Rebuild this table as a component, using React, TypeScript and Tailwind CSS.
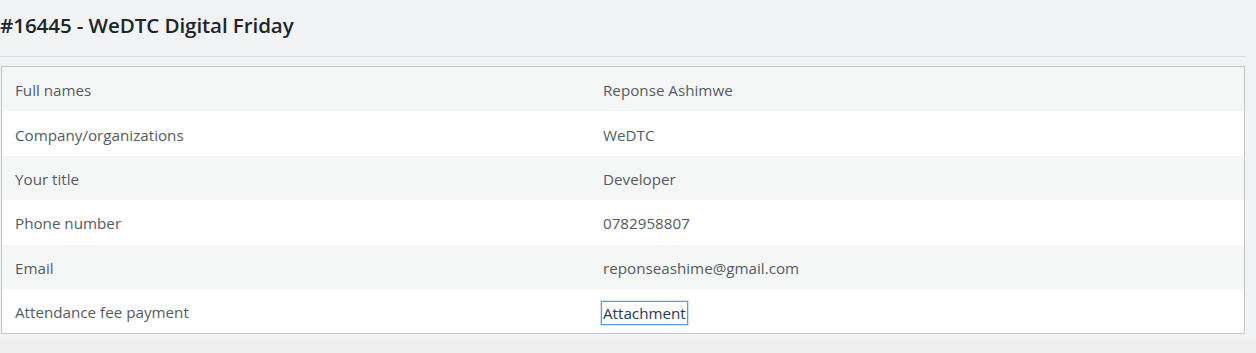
const rows: [string, string][] = [
  ['Full names', 'Reponse Ashimwe'],
  ['Company/organizations', 'WeDTC'],
  ['Your title', 'Developer'],
  ['Phone number', '0782958807'],
  ['Email', 'reponseashime@gmail.com'],
];

export default function App() {
  return (
    <div className="min-h-[353px] bg-[#efefef] font-['Open_Sans','Noto_Sans',sans-serif]">
      <div className="bg-[#f2f3f5] pr-[11px] pb-[6px]">
        <div className="border-b border-[#dcdde0] pt-[8px] pb-[14px]">
          <h1 className="text-[20.6px] leading-[34px] font-semibold text-[#212529] tracking-[-0.1px]">
            #16445 - WeDTC Digital Friday
          </h1>
        </div>
        <div className="mt-[9px] ml-px border border-[#c6c6c6] bg-white">
          {rows.map(([label, value], i) => (
            <div
              key={label}
              className={`grid grid-cols-[587px_1fr] h-[44.4px] items-center pt-[3px] text-[15.2px] text-[#555b61] ${
                i % 2 === 0 ? 'bg-[#f5f6f6]' : 'bg-white'
              }`}
            >
              <div className="pl-[13px]">{label}</div>
              <div className="pl-[14px]">{value}</div>
            </div>
          ))}
          <div className="grid grid-cols-[587px_1fr] h-[44.4px] items-center pt-[3px] text-[15.2px] text-[#555b61] bg-white">
            <div className="pl-[13px]">Attendance fee payment</div>
            <div className="pl-[12px]">
              <span className="inline-block border border-[#5b9bde] shadow-[0_0_0_1px_#cfe2f6] px-px leading-[22px] text-[#1f3a57]">
                Attachment
              </span>
            </div>
          </div>
        </div>
      </div>
    </div>
  );
}
